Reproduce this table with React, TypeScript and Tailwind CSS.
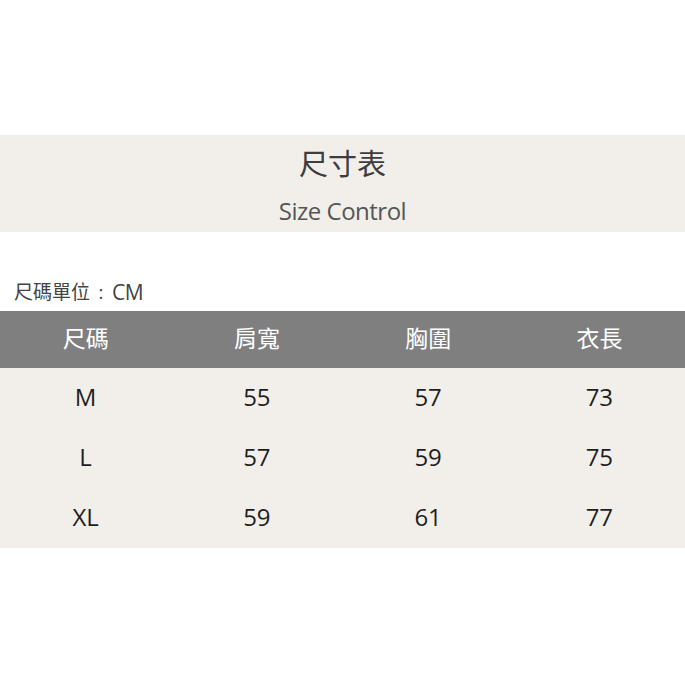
const rows = [
  ['M', '55', '57', '73'],
  ['L', '57', '59', '75'],
  ['XL', '59', '61', '77'],
];

const heads = ['尺碼', '肩寬', '胸圍', '衣長'];

export default function App() {
  return (
    <div
      className="w-[685px] h-[685px] bg-white flex flex-col"
      style={{ fontFamily: '"Open Sans", "Noto Sans CJK TC", sans-serif' }}
    >
      <div className="h-[135px]" />
      <div className="h-[97px] bg-[#f2efeb] flex flex-col items-center">
        <div className="mt-[12px] text-[29px] leading-[34px] text-[#3d3d3d]">尺寸表</div>
        <div className="mt-[16px] text-[24px] leading-[28px] text-[#555] tracking-[-0.5px]">Size Control</div>
      </div>
      <div className="h-[79px] flex items-end pb-[7px] pl-[14px] text-[19px] leading-[24px] text-[#444]">
        <span>尺碼單位</span>
        <span className="w-[22px] text-center">:</span>
        <span className="text-[21px] tracking-[-0.5px]">CM</span>
      </div>
      <div className="h-[57px] pb-[4px] bg-[#7f7f7f] grid grid-cols-4 items-center text-white text-[23px] leading-[30px]">
        {heads.map((h) => (
          <div key={h} className="text-center">{h}</div>
        ))}
      </div>
      <div className="bg-[#f2efeb]">
        {rows.map((r) => (
          <div key={r[0]} className="h-[60px] pb-[2px] grid grid-cols-4 items-center text-[24px] text-[#1e1e1e]">
            {r.map((c, i) => (
              <div key={i} className="text-center">{c}</div>
            ))}
          </div>
        ))}
      </div>
    </div>
  );
}
